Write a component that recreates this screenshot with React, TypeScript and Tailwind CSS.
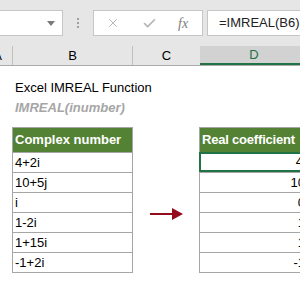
import { Check, X } from "lucide-react";

const leftRows = ["4+2i", "10+5j", "i", "1-2i", "1+15i", "-1+2i"];
const rightRows = ["4", "10", "0", "1", "1", "-1"];

const App = () => {
    return <div className="w-[300px] h-[299px] overflow-hidden bg-white font-['Liberation_Sans',Arial,sans-serif] text-black">
        {/* toolbar */}
        <div className="h-[46px] bg-[#e6e6e6] flex items-start pt-[10px]">
            <div className="-ml-px w-[64px] shrink-0 h-[26px] bg-white border border-[#c6c6c6] flex items-center justify-end pr-[7px]">
                <div className="w-0 h-0 border-l-[4px] border-r-[4px] border-t-[5px] border-l-transparent border-r-transparent border-t-[#7a7a7a]" />
            </div>
            <div className="w-[30px] shrink-0 h-[26px] flex flex-col items-center justify-center gap-[2px]">
                <div className="w-[2px] h-[2px] bg-[#a0a0a0]" />
                <div className="w-[2px] h-[2px] bg-[#a0a0a0]" />
                <div className="w-[2px] h-[2px] bg-[#a0a0a0]" />
            </div>
            <div className="w-[110px] shrink-0 h-[26px] bg-white border border-[#c6c6c6] flex items-center">
                <X className="ml-[12px] w-[14px] h-[14px] text-[#b4b4b4]" strokeWidth={1.6} />
                <Check className="ml-[22px] w-[15px] h-[15px] text-[#b4b4b4]" strokeWidth={2.6} />
                <span className="ml-[21px] font-['Liberation_Serif',serif] italic text-[14px] text-[#7d7d7d]">fx</span>
            </div>
            <div className="ml-[4px] flex-1 h-[26px] bg-white border border-[#c6c6c6] border-r-0 flex items-center pl-[11px] text-[13px] text-[#222] whitespace-nowrap overflow-hidden">
                =IMREAL(B6)
            </div>
        </div>
        {/* column headers */}
        <div className="h-[20px] flex bg-[#e6e6e6] border-b border-[#ababab] text-[13px]">
            <div className="w-[13px] shrink-0 border-r border-[#c0c0c0] flex items-center justify-end overflow-hidden">
                <span className="mr-[10px]">A</span>
            </div>
            <div className="w-[120px] shrink-0 border-r border-[#c0c0c0] flex items-center justify-center">B</div>
            <div className="w-[67px] shrink-0 flex items-center justify-center">C</div>
            <div className="flex-1 bg-[#d2d2d2] border-b-[2px] border-[#217346] flex items-center justify-center text-[#217346] pl-[8px]">D</div>
        </div>
        {/* sheet */}
        <div className="pl-[15px] pt-[12px] text-[13px]">
            <div className="h-[20px] flex items-center">Excel IMREAL Function</div>
            <div className="h-[20px] flex items-center font-bold italic text-[#a6a6a6]">IMREAL(inumber)</div>
        </div>
        <div className="flex mt-[9px] text-[13px]">
            <div className="ml-[12px] w-[121px] shrink-0 border border-[#a6a6a6]">
                <div className="h-[24px] bg-[#548235] text-white font-bold flex items-center pl-[2px]">Complex number</div>
                {leftRows.map((v) => (
                    <div key={v} className="h-[20px] border-t border-[#a6a6a6] flex items-center pl-[2px]">{v}</div>
                ))}
            </div>
            <div className="w-[66px] shrink-0 pt-[81px] pl-[17px]">
                <svg width="33" height="12" viewBox="0 0 33 12">
                    <rect x="0" y="5" width="24" height="2" fill="#960a1e" />
                    <polygon points="22,0 33,6 22,12" fill="#960a1e" />
                </svg>
            </div>
            <div className="w-[110px] shrink-0 border border-[#a6a6a6]">
                <div className="h-[24px] bg-[#548235] text-white font-bold flex items-center pl-[2px] whitespace-nowrap tracking-[-0.2px]">Real coefficient</div>
                {rightRows.map((v, i) => (
                    <div key={i} className={i === 0
                        ? "h-[20px] -mx-px border-[2px] border-[#217346] flex items-center justify-end pr-[4px]"
                        : "h-[20px] border-t border-[#a6a6a6] flex items-center justify-end pr-[3px]"}>{v}</div>
                ))}
            </div>
        </div>
    </div>
}

export default App;
